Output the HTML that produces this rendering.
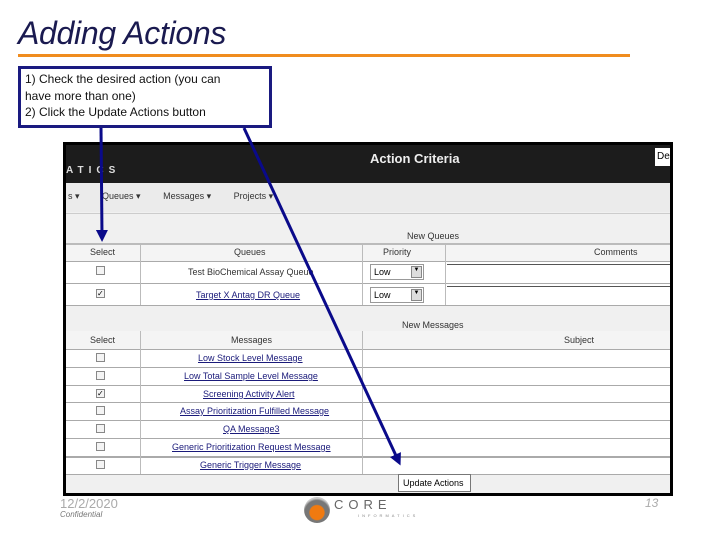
<!DOCTYPE html>
<html><head><meta charset="utf-8"><style>
*{margin:0;padding:0;box-sizing:border-box}
body{width:720px;height:540px;background:#fff;position:relative;overflow:hidden;font-family:"Liberation Sans",sans-serif}
.a{position:absolute}
.t{font-size:10px;color:#333;white-space:nowrap}
.lnk{color:#1a1a7a;text-decoration:underline;font-size:9px}
.cb{position:absolute;width:9px;height:9px;border:1px solid #888;background:#f4f4f4}
.hl{position:absolute;height:1px;background:#aaa}
.vl{position:absolute;width:1px;background:#bbb}
</style></head><body>
<div class="a" style="left:18px;top:15px;font-size:32px;font-style:italic;color:#1a1a50;letter-spacing:-0.3px">Adding Actions</div>
<div class="a" style="left:18px;top:54px;width:612px;height:3px;background:#f08c1e"></div>

<div class="a" style="left:63px;top:142px;width:610px;height:354px;background:#000"></div>
<div class="a" style="left:66px;top:145px;width:604px;height:348px;background:#f0f0f0"></div>
<div class="a" style="left:66px;top:145px;width:604px;height:38px;background:#1c1c1c"></div>
<div class="a" style="left:66px;top:165px;color:#ddd;font-size:10px;letter-spacing:5px;font-weight:bold">ATICS</div>
<div class="a" style="left:370px;top:151px;color:#eee;font-size:13px;font-weight:bold">Action Criteria</div>
<div class="a" style="left:655px;top:148px;width:15px;height:18px;background:#fff;font-size:10px;padding:3px 0 0 2px">De</div>
<div class="a" style="left:66px;top:183px;width:604px;height:29px;background:#ebebeb"></div>
<div class="a t" style="left:68px;top:191px;font-size:9px">s ▾ &nbsp; &nbsp; &nbsp; &nbsp; Queues ▾ &nbsp; &nbsp; &nbsp; &nbsp; Messages ▾ &nbsp; &nbsp; &nbsp; &nbsp; Projects ▾</div>
<div class="hl" style="left:66px;top:213px;width:604px;background:#ccc"></div>
<div class="a t" style="left:407px;top:231px;font-size:9px">New Queues</div>

<div class="a" style="left:66px;top:243px;width:604px;height:62px;background:#fff"></div>
<div class="a" style="left:66px;top:243px;width:604px;height:18px;background:#f4f4f4;border-top:2px solid #bbb"></div>
<div class="hl" style="left:66px;top:261px;width:604px"></div>
<div class="hl" style="left:66px;top:283px;width:604px"></div>
<div class="hl" style="left:66px;top:305px;width:604px"></div>
<div class="vl" style="left:140px;top:243px;height:62px"></div>
<div class="vl" style="left:362px;top:243px;height:62px"></div>
<div class="vl" style="left:445px;top:243px;height:62px"></div>
<div class="a t" style="left:90px;top:247px;font-size:9px">Select</div>
<div class="a t" style="left:234px;top:247px;font-size:9px">Queues</div>
<div class="a t" style="left:383px;top:247px;font-size:9px">Priority</div>
<div class="a t" style="left:594px;top:247px;font-size:9px">Comments</div>
<div class="cb" style="left:96px;top:266px"></div>
<div class="cb" style="left:96px;top:289px;font-size:8px;line-height:7px">✓</div>
<div class="a t" style="left:188px;top:267px;font-size:9px">Test BioChemical Assay Queue</div>
<div class="a lnk" style="left:196px;top:290px">Target X Antag DR Queue</div>
<div class="a" style="left:370px;top:264px;width:54px;height:16px;border:1px solid #999;font-size:9px;padding:2px 3px">Low<span style="position:absolute;right:1px;top:1px;width:11px;height:12px;border:1px solid #888;background:#ddd;font-size:6px;text-align:center">▼</span></div>
<div class="a" style="left:370px;top:287px;width:54px;height:16px;border:1px solid #999;font-size:9px;padding:2px 3px">Low<span style="position:absolute;right:1px;top:1px;width:11px;height:12px;border:1px solid #888;background:#ddd;font-size:6px;text-align:center">▼</span></div>
<div class="a" style="left:447px;top:264px;width:223px;height:18px;border-top:1px solid #555"></div>
<div class="a" style="left:447px;top:286px;width:223px;height:18px;border-top:1px solid #555"></div>

<div class="a t" style="left:402px;top:320px;font-size:9px">New Messages</div>
<div class="a" style="left:66px;top:331px;width:604px;height:143px;background:#fff"></div>
<div class="a" style="left:66px;top:331px;width:604px;height:18px;background:#f4f4f4"></div>
<div class="hl" style="left:66px;top:349px;width:604px"></div>
<div class="hl" style="left:66px;top:367px;width:604px"></div>
<div class="hl" style="left:66px;top:385px;width:604px"></div>
<div class="hl" style="left:66px;top:402px;width:604px"></div>
<div class="hl" style="left:66px;top:420px;width:604px"></div>
<div class="hl" style="left:66px;top:438px;width:604px"></div>
<div class="hl" style="left:66px;top:456px;width:604px;height:2px"></div>
<div class="hl" style="left:66px;top:474px;width:604px"></div>
<div class="vl" style="left:140px;top:331px;height:143px"></div>
<div class="vl" style="left:362px;top:331px;height:143px"></div>
<div class="a t" style="left:90px;top:335px;font-size:9px">Select</div>
<div class="a t" style="left:231px;top:335px;font-size:9px">Messages</div>
<div class="a t" style="left:564px;top:335px;font-size:9px">Subject</div>
<div class="cb" style="left:96px;top:353px"></div>
<div class="cb" style="left:96px;top:371px"></div>
<div class="cb" style="left:96px;top:389px;font-size:8px;line-height:7px">✓</div>
<div class="cb" style="left:96px;top:406px"></div>
<div class="cb" style="left:96px;top:424px"></div>
<div class="cb" style="left:96px;top:442px"></div>
<div class="cb" style="left:96px;top:460px"></div>
<div class="a lnk" style="left:198px;top:353px">Low Stock Level Message</div>
<div class="a lnk" style="left:184px;top:371px">Low Total Sample Level Message</div>
<div class="a lnk" style="left:203px;top:389px">Screening Activity Alert</div>
<div class="a lnk" style="left:180px;top:406px">Assay Prioritization Fulfilled Message</div>
<div class="a lnk" style="left:223px;top:424px">QA Message3</div>
<div class="a lnk" style="left:172px;top:442px">Generic Prioritization Request Message</div>
<div class="a lnk" style="left:200px;top:460px">Generic Trigger Message</div>
<div class="a" style="left:398px;top:474px;width:73px;height:18px;border:1px solid #777;background:#fff;font-size:9px;padding:3px 0 0 4px;white-space:nowrap">Update Actions</div>

<div class="a" style="left:18px;top:66px;width:254px;height:62px;border:3px solid #1a1a80;background:#fff;font-size:12px;line-height:16.5px;padding:2px 24px 0 4px;color:#111">1) Check the desired action (you can have more than one)<br>2) Click the Update Actions button</div>

<svg class="a" style="left:0;top:0" width="720" height="540">
<defs><marker id="m" markerWidth="4" markerHeight="4" refX="2" refY="2" orient="auto" markerUnits="strokeWidth"><path d="M0,0 L4,2 L0,4 z" fill="#0a0a8a"/></marker></defs>
<line x1="101" y1="128" x2="102" y2="236" stroke="#0a0a8a" stroke-width="3" marker-end="url(#m)"/>
<line x1="244" y1="128" x2="398" y2="460" stroke="#0a0a8a" stroke-width="3" marker-end="url(#m)"/>
</svg>

<div class="a" style="left:60px;top:496px;font-size:13px;color:#aaa">12/2/2020</div>
<div class="a" style="left:60px;top:510px;font-size:8px;color:#777;font-style:italic">Confidential</div>
<div class="a" style="left:645px;top:496px;font-size:12px;color:#aaa;font-style:italic">13</div>
<div class="a" style="left:304px;top:497px;width:26px;height:26px;border-radius:50%;background:radial-gradient(circle at 50% 60%,#f07a10 0 35%,#777 40% 60%,#ccc 70%)"></div>
<div class="a" style="left:334px;top:497px;font-size:13px;letter-spacing:5px;color:#666">CORE</div>
<div class="a" style="left:358px;top:513px;font-size:4px;letter-spacing:3px;color:#888">INFORMATICS</div>
</body></html>
